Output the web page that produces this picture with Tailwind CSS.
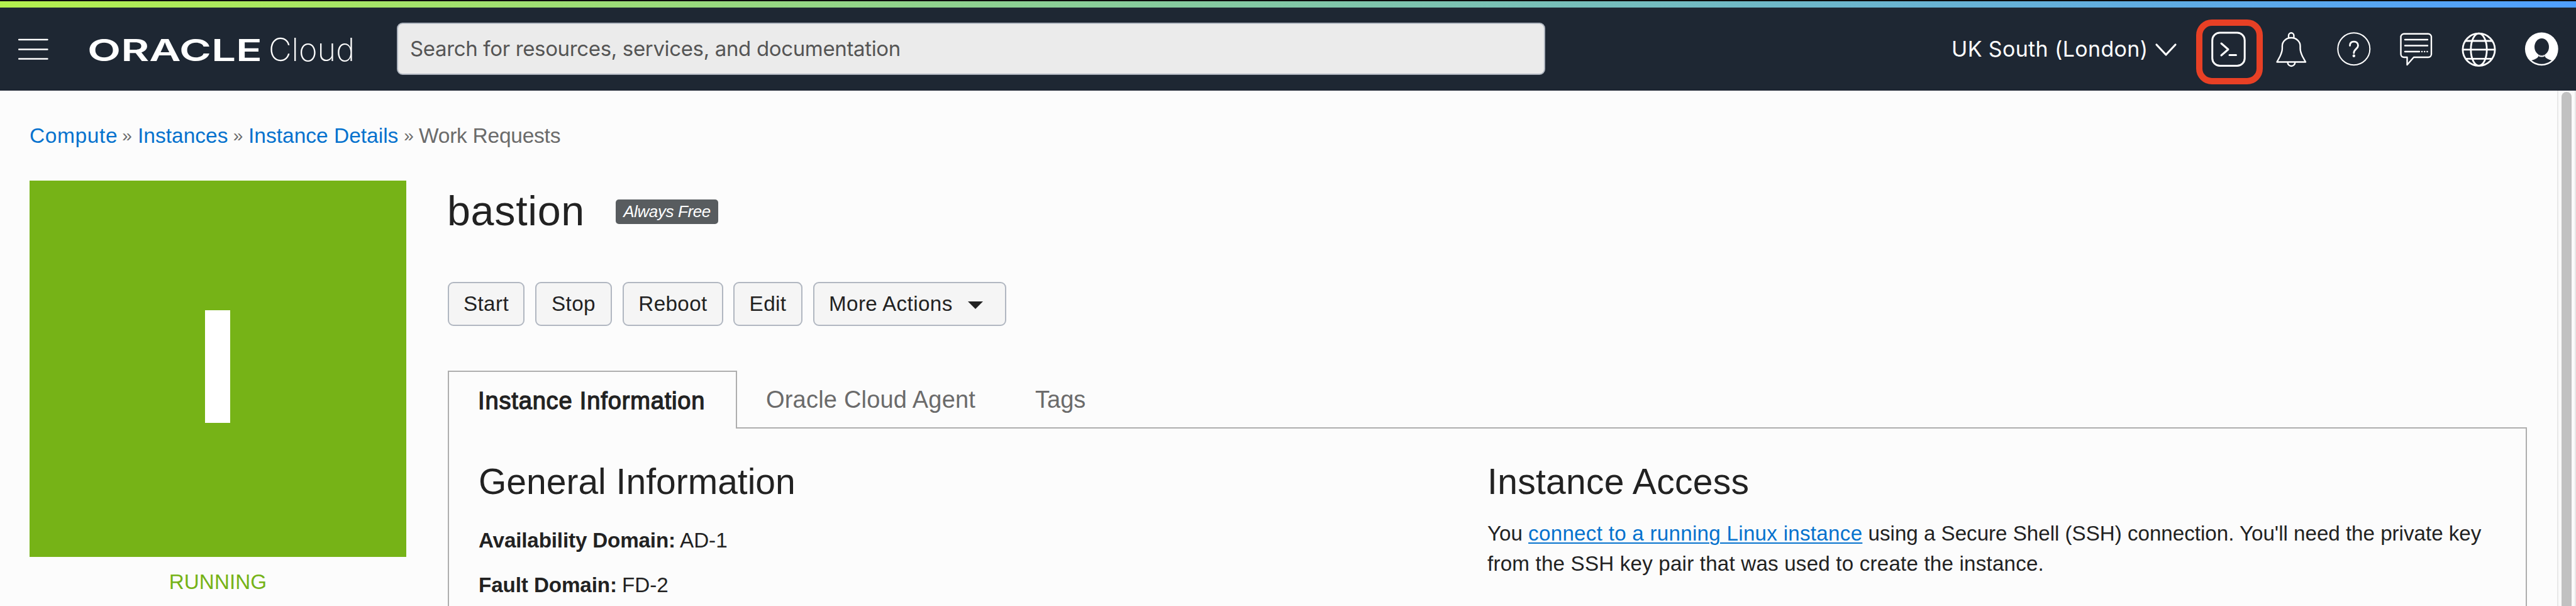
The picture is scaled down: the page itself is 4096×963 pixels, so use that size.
<!DOCTYPE html>
<html lang="en">
<head>
<meta charset="utf-8">
<title>bastion - Oracle Cloud</title>
<script src="https://cdn.jsdelivr.net/npm/@tailwindcss/browser@4"></script>
</head>
<body class="flex h-[963px] w-[4096px] flex-col overflow-hidden bg-[#fcfcfc] font-['Liberation_Sans',Arial,sans-serif] text-[33.2px] text-[#222222]">
  <div class="h-[2px] shrink-0 bg-[#0d0d0d]"></div>
  <div class="h-[10px] shrink-0 bg-linear-to-r/srgb from-[#b4f04e] to-[#4f9fff]"></div>

  <header class="flex h-[132px] shrink-0 items-center border-b border-[#191f2e] bg-[#1e2733] font-[Inter,sans-serif] text-white">
    <svg class="ml-[29px] h-[34px] w-[48px] shrink-0" viewBox="0 0 48 34" fill="none" stroke="#fff" stroke-width="2.4" stroke-linecap="round"><path d="M1 2h45.500M1 17.500h45.500M1 32.500h45.500"/></svg>
    <svg class="ml-[65px] h-[52px] w-[422px] shrink-0 overflow-visible" viewBox="0 0 422 52" fill="#fff">
      <text x="-3" y="45" font-family="Inter, sans-serif" font-size="48.500" font-weight="600" textLength="278" lengthAdjust="spacingAndGlyphs">ORACLE</text>
      <text x="285" y="45" font-family="Inter, sans-serif" font-size="51" font-weight="200" textLength="137" lengthAdjust="spacingAndGlyphs">Cloud</text>
    </svg>
    <div class="ml-[67px] flex h-[83px] w-[1826px] shrink-0 items-center rounded-[9px] border-2 border-[#afb5bf] bg-[#ebebeb] pl-[19px] text-[33px] tracking-[-0.35px] text-[#555555]">Search for resources, services, and documentation</div>
    <div class="ml-[646px] w-[312px] shrink-0 whitespace-nowrap text-[34px] tracking-[0.35px]">UK South (London)</div>
    <svg class="ml-[12px] h-[22px] w-[34px] shrink-0 overflow-visible" viewBox="0 0 34 22" fill="none" stroke="#fff" stroke-width="3.200" stroke-linecap="round" stroke-linejoin="round"><path d="M2 4l15 16 15-16"/></svg>
    <div class="relative ml-[54px] h-[56px] w-[56px] shrink-0">
      <svg class="h-[56px] w-[56px]" viewBox="0 0 56 56" fill="none" stroke="#fff" stroke-width="3" stroke-linecap="round" stroke-linejoin="round"><rect x="2.700" y="2" width="51.500" height="52.500" rx="12"/><path d="M17 19l11 9.500-11 9.500M30 37.500h10.500"/></svg>
      <div class="absolute -top-[19px] -left-[23px] h-[103px] w-[106px] rounded-[25px] border-[10px] border-[#e84025]"></div>
    </div>
    <svg class="ml-[44px] h-[56px] w-[56px] shrink-0 overflow-visible" viewBox="0 0 56 56" fill="none" stroke="#fff" stroke-width="2.400" stroke-linejoin="round"><path d="M5.500 48.500h45.500L46 39.500Q42.500 32 42.500 27V23a14.300 13 0 0 0-28.600 0v4q0 5-3.500 12.500zM24 10V6.500a4.200 4.200 0 0 1 8.400 0V10M22.500 49a5.900 6 0 0 0 11.800 0"/></svg>
    <svg class="ml-[44px] h-[56px] w-[56px] shrink-0" viewBox="0 0 56 56" fill="none" stroke="#fff" stroke-width="2"><circle cx="27.800" cy="27.800" r="25.500"/><path d="M21.500 22.500c0-4.500 2.500-6.300 6.400-6.300s6.600 2.300 6.600 6.300c0 5-6.700 5.500-6.700 11.800" stroke-width="2.800" stroke-linecap="round"/><circle cx="27.800" cy="38.800" r="2.200" fill="#fff" stroke="none"/></svg>
    <svg class="ml-[43px] h-[56px] w-[56px] shrink-0" viewBox="0 0 56 56" fill="none" stroke="#fff" stroke-width="2.400" stroke-linejoin="round" stroke-linecap="round"><path d="M8.500 3.800h38.500a5 5 0 0 1 5 5V36a5 5 0 0 1-5 5H24L13.500 53V41H8.500a5 5 0 0 1-5-5V8.800a5 5 0 0 1 5-5zM10 13h36M10 22.500h36M10 32h23M37 32h.1M41.200 32h.1M45.400 32h.1"/></svg>
    <svg class="ml-[44px] h-[56px] w-[56px] shrink-0" viewBox="0 0 56 56" fill="none" stroke="#fff" stroke-width="2.800"><circle cx="27.500" cy="28.800" r="25.600"/><ellipse cx="27.500" cy="28.800" rx="12.700" ry="25.600"/><path d="M2 28.800h51M6.500 15h42M6.500 43.300h42"/></svg>
    <svg class="ml-[43px] h-[56px] w-[56px] shrink-0" viewBox="0 0 56 56"><circle cx="28.300" cy="27.800" r="26.400" fill="#fff"/><ellipse cx="28.500" cy="24.500" rx="11.500" ry="13.500" fill="#1e2733"/><path d="M23 36.500q5.500 4.500 10.700 0v3.500q2 3.500 10.600 6-16 11.500-32 0 8.700-2.500 10.700-6z" fill="#1e2733"/><path d="M23 37q5.500 3.500 10.700 0" fill="none" stroke="#fff" stroke-width="1.600" transform="translate(0 1)"/></svg>
  </header>

  <div class="flex min-h-0 grow">
    <main class="min-w-0 grow pt-[52px] pl-[47px]">
      <nav class="flex text-[33.5px] leading-[40px] whitespace-nowrap text-[#6b6b6b]">
        <a class="w-[138px] tracking-[0.6px] text-[#0572ce]">Compute</a>
        <span class="w-[34px] text-center text-[28px]">»</span>
        <a class="w-[143px] text-[#0572ce]">Instances</a>
        <span class="w-[33px] text-center text-[28px]">»</span>
        <a class="w-[239px] text-[#0572ce]">Instance Details</a>
        <span class="w-[32px] text-center text-[28px]">»</span>
        <span class="tracking-[-0.25px]">Work Requests</span>
      </nav>

      <div class="mt-[51px] flex">
        <aside class="w-[599px] shrink-0">
          <div class="flex h-[598px] bg-[#76b317] pt-[206px] pl-[279px]">
            <div class="h-[179px] w-[40px] bg-white"></div>
          </div>
          <div class="mt-[20px] text-center leading-[40px] tracking-[0.1px] text-[#76b317]">RUNNING</div>
        </aside>

        <section class="ml-[65px] w-[3307px] shrink-0">
          <div class="mt-[8px] flex h-[80px] items-center">
            <h1 class="w-[268px] text-[66.4px] leading-[80px] tracking-[0.7px]">bastion</h1>
            <span class="mt-[3px] flex h-[39px] w-[163px] items-center justify-center rounded-[5px] bg-[#585c5f] text-[26px] tracking-[-0.4px] whitespace-nowrap text-white italic">Always Free</span>
          </div>

          <div class="mt-[73px] ml-[1px] flex gap-[17px] tracking-[0.4px] whitespace-nowrap">
            <button class="h-[70px] w-[122px] rounded-[9px] border-2 border-[#b1b7c1] bg-[#f5f5f5]">Start</button>
            <button class="h-[70px] w-[122px] rounded-[9px] border-2 border-[#b1b7c1] bg-[#f5f5f5]">Stop</button>
            <button class="h-[70px] w-[160px] rounded-[9px] border-2 border-[#b1b7c1] bg-[#f5f5f5]">Reboot</button>
            <button class="-ml-px h-[70px] w-[110px] rounded-[9px] border-2 border-[#b1b7c1] bg-[#f5f5f5]">Edit</button>
            <button class="flex h-[70px] w-[307px] items-center rounded-[9px] border-2 border-[#b1b7c1] bg-[#f5f5f5] pl-[23px]">
              <span class="w-[221px] text-left">More Actions</span>
              <svg class="mt-[3px] h-[12px] w-[24px]" viewBox="0 0 24 12" fill="#222"><path d="M0 0h24L12 12z"/></svg>
            </button>
          </div>

          <div class="mt-[71px] ml-[1px] flex h-[92px] text-[38px] leading-[40px] whitespace-nowrap">
            <div class="w-[460px] border-x-2 border-t-2 border-[#aeaeae] pt-[26px] pl-[46px] tracking-[0.85px] [-webkit-text-stroke:1.3px_#222]">Instance Information</div>
            <div class="flex grow border-b-2 border-[#aeaeae] pt-[26px] pl-[46px] text-[#6b6b6b]">
              <div class="w-[428px] tracking-[0.2px]">Oracle Cloud Agent</div>
              <div>Tags</div>
            </div>
          </div>
          <div class="ml-[1px] flex h-[282px] border-x-2 border-[#aeaeae] pt-[52px] pl-[47px]">
            <div class="w-[1604px] shrink-0">
              <h2 class="text-[57px] leading-[64px]">General Information</h2>
              <div class="mt-[42px] flex leading-[40px]"><b class="w-[320px] tracking-[-0.15px]">Availability Domain:</b>AD-1</div>
              <div class="mt-[31px] flex leading-[40px]"><b class="w-[228px] tracking-[-0.1px]">Fault Domain:</b>FD-2</div>
            </div>
            <div class="shrink-0 whitespace-nowrap">
              <h2 class="text-[57px] leading-[64px] tracking-[0.3px]">Instance Access</h2>
              <p class="mt-[27px] leading-[47.5px] tracking-[-0.03px]">You <a class="tracking-[0.26px] text-[#0572ce] underline decoration-2 underline-offset-[3px]">connect to a running Linux instance</a> using a Secure Shell (SSH) connection. You'll need the private key<br><span class="tracking-[0.18px]">from the SSH key pair that was used to create the instance.</span></p>
            </div>
          </div>
        </section>
      </div>
    </main>

    <div class="flex w-[30px] shrink-0 justify-center border-r-2 border-l-2 border-[#e8e8e8] bg-[#fafafa] pt-[2px]">
      <div class="h-[840px] w-[16px] rounded-t-[8px] bg-[#c1c1c1]"></div>
    </div>
  </div>
</body>
</html>
